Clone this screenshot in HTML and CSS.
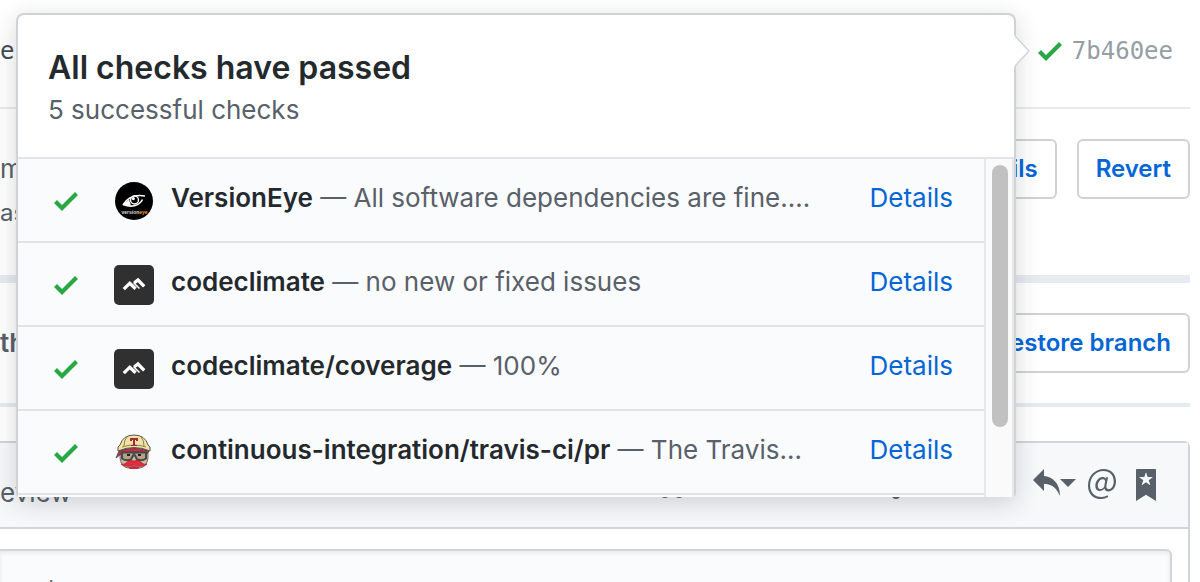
FILE: index.html
```html
<!DOCTYPE html>
<html lang="en">
<head>
<meta charset="utf-8">
<title>All checks have passed</title>
<link rel="stylesheet" href="styles.css">
</head>
<body>
<svg class="defs" aria-hidden="true">
  <symbol id="check" viewBox="0 0 12 16"><path d="M12 5l-8 8-4-4 1.500-1.500L4 10l6.500-6.500z"/></symbol>
  <symbol id="climate" viewBox="0 0 40 40"><rect width="40" height="40" rx="5" fill="#303030"/><path d="M9.800 24.200L15.800 18.200L21.600 23.800M20.300 17.800L24 15L30.200 21.400" fill="none" stroke="#fff" stroke-width="3.300"/><path d="M19.500 17.500L25.500 23.500" stroke="#fff" stroke-width="1.500"/></symbol>
</svg>
<main class="page">
  <section class="row commit">
    <span class="mono subject">e</span>
    <span class="sha"><svg class="check"><use href="#check"/></svg><a href="#commit" class="mono">7b460ee</a></span>
  </section>
  <section class="row merged">
    <div class="summary"><span>m</span><span class="small">as</span></div>
    <div class="buttons"><button class="btn">Details</button><button class="btn">Revert</button></div>
  </section>
  <section class="row branch">
    <strong class="branch-text">th</strong>
    <button class="btn">Restore branch</button>
  </section>
  <section class="editor">
    <header class="editor-head">
      <span class="tab">eview</span>
      <svg class="format" width="240" height="30" viewBox="0 0 240 30"><circle cx="5" cy="25" r="4"/><circle cx="19" cy="25" r="4"/><circle cx="236" cy="26" r="4"/></svg>
      <div class="tools">
        <button class="tool" aria-label="Reply"><svg width="28" height="32" viewBox="0 0 14 16"><path d="M6 3.500c3.920.44 8 3.125 8 10-2.312-5.062-4.750-6-8-6V11L.5 5.500 6 0v3.500z"/></svg><svg width="16" height="32" viewBox="0 0 16 32"><path d="M0 10h16l-8 8z"/></svg></button>
        <button class="tool" aria-label="Mention"><svg width="28" height="32" viewBox="0 0 14 16"><path d="M6.580 15c1.250 0 2.520-.31 3.560-.94l-.42-.94c-.84.52-1.890.83-3.030.83-3.230 0-5.640-2.080-5.640-5.720 0-4.370 3.230-7.180 6.580-7.180 3.450 0 5.220 2.190 5.220 5.200 0 2.390-1.340 3.860-2.500 3.860-1.050 0-1.360-.73-1.050-2.190l.73-3.750H8.980l-.11.72c-.41-.63-.94-.83-1.560-.83-2.190 0-3.660 2.390-3.660 4.380 0 1.670.94 2.610 2.300 2.610.84 0 1.670-.53 2.300-1.250.11.94.94 1.450 1.980 1.450 1.670 0 3.770-1.670 3.770-5C14 2.610 11.590 0 7.830 0 3.660 0 0 3.330 0 8.330 0 12.710 2.920 15 6.580 15zm-.31-5c-.73 0-1.360-.52-1.360-1.670 0-1.450.94-3.220 2.410-3.220.52 0 .84.2 1.250.83l-.52 3.020C7.420 9.690 6.880 10 6.270 10z"/></svg></button>
        <button class="tool" aria-label="Saved replies"><svg width="20" height="32" viewBox="0 0 10 16"><path d="M9.500 0H.5C.2 0 0 .2 0 .5V16l5-3.090L10 16V.5c0-.3-.2-.5-.5-.5zM8.220 4.250L6.360 5.610l.72 2.160c.06.22-.02.28-.2.17L5 6.600 3.120 7.940c-.19.11-.25.05-.2-.17l.72-2.160-1.860-1.360c-.17-.16-.14-.23.09-.23l2.300-.03.7-2.160h.25l.7 2.160 2.300.03c.23 0 .27.08.09.23z"/></svg></button>
      </div>
    </header>
    <textarea class="comment" aria-label="Comment" placeholder="l"></textarea>
  </section>
</main>

<aside class="popover">
  <svg class="arrow" width="16" height="32" viewBox="0 0 16 32"><path d="M0 0L15 16L0 32Z" fill="#fff"/><path d="M1 1L15 16L1 31" fill="none" stroke="#d1d5da" stroke-width="1.500"/></svg>
  <header class="pop-head">
    <h1 class="title">All checks have passed</h1>
    <p class="sub">5 successful checks</p>
  </header>
  <div class="scroller">
    <ul class="checks">
      <li class="item"><svg class="check"><use href="#check"/></svg>
        <svg class="avatar" viewBox="0 0 40 40"><circle cx="20" cy="20" r="19" fill="#000"/><path d="M9 24C13 17 19 13 31 15" fill="none" stroke="#fff" stroke-width="1.600"/><path d="M9 23.500C17 26.500 25 25.500 28.500 18.500" fill="none" stroke="#fff" stroke-width="1.600"/><path d="M9 24L15 18.500L17 24.500Z" fill="#fff"/><circle cx="20.500" cy="19" r="4" fill="#000" stroke="#fff" stroke-width="1.400"/><circle cx="19.300" cy="17.600" r="1.600" fill="#fff"/><text x="7.500" y="33" class="logo-text" fill="#ddd">version<tspan fill="#e8a020">eye</tspan></text></svg>
        <span class="text"><strong>VersionEye</strong> — All software dependencies are fine.…</span><a href="#d1">Details</a></li>
      <li class="item"><svg class="check"><use href="#check"/></svg><svg class="avatar"><use href="#climate"/></svg>
        <span class="text"><strong>codeclimate</strong> — no new or fixed issues</span><a href="#d2">Details</a></li>
      <li class="item"><svg class="check"><use href="#check"/></svg><svg class="avatar"><use href="#climate"/></svg>
        <span class="text"><strong>codeclimate/coverage</strong> — 100%</span><a href="#d3">Details</a></li>
      <li class="item"><svg class="check"><use href="#check"/></svg>
        <svg class="avatar" viewBox="0 0 40 40"><path d="M6 17h28v8q-1 9-8 10H14q-7-1-8-10z" fill="#d8b896" stroke="#555" stroke-width=".8"/><path d="M5 18Q20 12 35 18L33 21Q20 17 7 21L2 25Z" fill="#c32d43" stroke="#333" stroke-width=".7"/><path d="M4 18Q3 13 6 12Q9 2 20 2Q31 2 34 12Q37 13 36 18Q20 11 4 18Z" fill="#f2e4a0" stroke="#555" stroke-width="1"/><path d="M10 13Q10 7 13 4M30 13Q30 7 27 4M8 14Q20 10 32 14" fill="none" stroke="#8b8460"/><path d="M16 5h8v3h-2V7h-1v5h2v1h-6v-1h2V7h-1v1h-2z" fill="#a52a3c"/><path d="M8 19.500h10.500l1.500 1 1.500-1H32v6q-4 3-9 1l-2-4h-2l-2 4q-5 2-9-1z" fill="#b9a283" stroke="#414b50" stroke-width="2"/><path d="M13 22h3M24 22h3" stroke="#222" stroke-width="2"/><path d="M20 28Q15 26 12 30Q10 32 7 31Q11 35 20 32Q29 35 33 31Q30 32 28 30Q25 26 20 28Z" fill="#e22d3e" stroke="#a92a38" stroke-width=".8"/><path d="M14 34q6-2 12 0l-2 2h-8z" fill="#c32d43"/></svg>
        <span class="text"><strong>continuous-integration/travis-ci/pr</strong> — The Travis…</span><a href="#d4">Details</a></li>
    </ul>
    <div class="track"><div class="thumb"></div></div>
  </div>
</aside>
</body>
</html>
```
FILE: styles.css
```css
* { box-sizing: border-box; }
body {
  margin: 0;
  height: 100vh;
  overflow: hidden;
  position: relative;
  background: #fff;
  color: #586069;
  font: 26px/40px Inter, "Liberation Sans", sans-serif;
}
a { color: #0366d6; text-decoration: none; }
strong { font-weight: 600; }
.defs { position: absolute; width: 0; height: 0; }
.page { height: 100vh; overflow: hidden; margin-right: 10px; }
.row { display: flex; justify-content: space-between; }
.mono { font: 24px/32px "DejaVu Sans Mono", monospace; }
.check { flex: none; width: 24px; height: 32px; fill: #28a745; }

.commit { padding: 35px 17px 40px 0; border-bottom: 2px solid #e6ebf1; }
.subject { color: #444d56; }
.sha { display: flex; gap: 10px; }
.sha .mono { color: #959da5; }
.merged { padding: 30px 0 42px; border-bottom: 8px solid #e6ebf1; }
.summary { display: flex; flex-direction: column; gap: 4px; padding-top: 10px; }
.small { font-size: 24px; }
.buttons { display: flex; align-items: flex-start; gap: 20px; }
.btn {
  height: 60px;
  padding: 0 17px;
  border: 2px solid #d1d2d3;
  border-radius: 6px;
  background: #fff;
  color: #0366d6;
  font: 600 24px/36px Inter, "Liberation Sans", sans-serif;
}
.branch { padding: 30px 0; border-bottom: 4px solid #e6ebf1; }
.branch-text { padding-top: 10px; }
.editor {
  margin-top: 34px;
  border: 2px solid #d1d5da;
  border-left: 0;
  border-top-right-radius: 6px;
}
.editor-head {
  display: flex;
  justify-content: space-between;
  height: 86px;
  padding: 26px 32px 0 0;
  background: #f6f8fa;
  border-bottom: 2px solid #d1d5da;
}
.tab { padding-top: 4px; }
.format { margin: 0 132px 0 auto; fill: #586069; }
.tools { display: flex; align-items: flex-start; gap: 12px; }
.tool:last-child { margin-left: 8px; }
.tool { display: flex; padding: 0; border: 0; background: none; fill: #586069; }
.comment {
  display: block;
  width: calc(100% - 16px);
  height: 100px;
  margin-top: 20px;
  padding: 20px 48px;
  border: 2px solid #d1d5da;
  border-left: 0;
  border-top-right-radius: 6px;
  background: #fafbfc;
  box-shadow: inset 0 2px 4px rgba(27, 31, 35, .08);
  font: 26px/38px Inter, sans-serif;
  resize: none;
}

.popover {
  position: absolute;
  top: 13px;
  left: 16px;
  right: 184px;
  border: 2px solid #d0d3d5;
  border-bottom: 0;
  border-radius: 8px 8px 4px 4px;
  background: #fff;
  box-shadow: 0 6px 24px rgba(27, 31, 35, .18);
}
.arrow { position: absolute; top: 20px; right: -16px; }
.pop-head { padding: 32px 30px 26px; border-bottom: 2px solid #e1e4e8; }
.title { margin: 0; color: #24292e; font-size: 32px; font-weight: 600; line-height: 42px; }
.sub { margin: 0; line-height: 42px; }
.scroller { display: flex; height: 338px; overflow: hidden; background: #fafbfc; }
.checks { flex: 1; min-width: 0; margin: 0; padding: 0; list-style: none; }
.item {
  display: flex;
  align-items: center;
  height: 84px;
  padding: 0 31px 0 36px;
  border-bottom: 2px solid #e1e4e8;
}
.item .check { margin-top: 2px; }
.avatar { flex: none; width: 40px; height: 40px; margin: 2px 17px 0 36px; }
.logo-text { font: bold 5px "Liberation Sans", sans-serif; }
.text { flex: 1; min-width: 0; padding-bottom: 4px; white-space: nowrap; }
.text strong { color: #24292e; }
.item a { padding-bottom: 4px; }
.track {
  width: 30px;
  padding: 6px 4px 0 6px;
  border: solid #e8e8e8;
  border-width: 0 2px;
  background: #fafafa;
}
.thumb { width: 16px; height: 262px; border-radius: 8px; background: #c1c1c1; }
```
